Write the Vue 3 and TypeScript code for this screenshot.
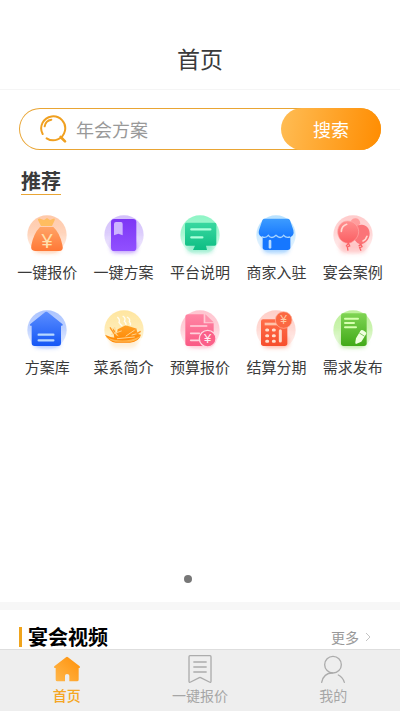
<script setup lang="ts">
import { ref } from 'vue'

interface Entry {
  id: string
  label: string
  halo: string
  from: string
  to: string
}

const entries: Entry[] = [
  { id: 'quote', label: '一键报价', halo: '#ffc9aa', from: '#ffa366', to: '#ff7836' },
  { id: 'plan', label: '一键方案', halo: '#d3c0fb', from: '#7d36f5', to: '#9150ff' },
  { id: 'about', label: '平台说明', halo: '#8ff5c6', from: '#39d8a0', to: '#0dbd83' },
  { id: 'shop', label: '商家入驻', halo: '#b9e2ff', from: '#3d9cff', to: '#1677ff' },
  { id: 'case', label: '宴会案例', halo: '#ffcccc', from: '#ff8f8f', to: '#fb5e62' },
  { id: 'library', label: '方案库', halo: '#adc5ff', from: '#5b8dff', to: '#1557f5' },
  { id: 'cuisine', label: '菜系简介', halo: '#ffe6a0', from: '#ffa126', to: '#ff8500' },
  { id: 'budget', label: '预算报价', halo: '#ffc4cf', from: '#ff86a4', to: '#fa5a85' },
  { id: 'settle', label: '结算分期', halo: '#ffcfc8', from: '#ff6e4a', to: '#f74e2c' },
  { id: 'demand', label: '需求发布', halo: '#bdf09a', from: '#7fd453', to: '#41aa18' },
]

const keyword = ref('')
const tab = ref('home')
</script>

<template>
  <div class="page">
    <header class="header">
      <h1>首页</h1>
    </header>

    <main class="content">
      <form class="search" @submit.prevent>
        <svg class="search-icon" viewBox="0 0 84 90" fill="none" stroke="#f0a020" stroke-linecap="round" aria-hidden="true">
          <path d="M11 60A36 36 0 1 1 23 73" stroke-width="6" />
          <path d="M17 37A24 24 0 0 1 37 17" stroke-width="6" />
          <path d="M65 69L78 82" stroke-width="8" />
        </svg>
        <input v-model="keyword" type="text" placeholder="年会方案" aria-label="搜索方案" />
        <button type="submit">搜索</button>
      </form>

      <section class="recommend">
        <h2>推荐</h2>
        <nav class="grid">
          <a v-for="e in entries" :key="e.id" href="#" @click.prevent>
            <svg class="entry-icon" viewBox="40 18 144 144" aria-hidden="true">
              <defs>
                <linearGradient :id="e.id + '-halo'" x1="0" y1="0" x2="0" y2="1">
                  <stop offset="0" :stop-color="e.halo" />
                  <stop offset="0.45" :stop-color="e.halo" stop-opacity="0.8" />
                  <stop offset="1" :stop-color="e.halo" stop-opacity="0.1" />
                </linearGradient>
                <linearGradient :id="e.id + '-fill'" x1="0" y1="0" x2="0" y2="1">
                  <stop offset="0" :stop-color="e.from" />
                  <stop offset="1" :stop-color="e.to" />
                </linearGradient>
                <filter :id="e.id + '-soft'" x="-20%" y="-20%" width="140%" height="140%">
                  <feGaussianBlur stdDeviation="2" />
                </filter>
                <filter :id="e.id + '-blur'" x="-40%" y="-60%" width="180%" height="220%">
                  <feGaussianBlur stdDeviation="7" />
                </filter>
              </defs>
              <circle cx="112" cy="90" r="59" :fill="`url(#${e.id}-halo)`" :filter="`url(#${e.id}-soft)`" />
              <rect x="72" y="108" width="80" height="36" rx="14" :fill="e.from" opacity="0.4" :filter="`url(#${e.id}-blur)`" />

              <g v-if="e.id === 'quote'">
                <path d="M94 63L85 45Q84 39 92 41L103 45L112 39L121 45L131 41Q137 39 135 46L127 63Z" fill="#ffbd60" />
                <path d="M91 66H131Q150 83 158 119Q163 138 148 138H76Q62 138 65 121Q72 85 91 66Z" fill="url(#quote-fill)" />
                <text class="yen" x="112" y="128" font-size="60" fill="#ffe0ad">¥</text>
              </g>

              <g v-else-if="e.id === 'plan'">
                <rect x="73" y="42" width="76" height="96" rx="10" fill="url(#plan-fill)" />
                <path d="M82 57Q82 51 88 51H103Q108 51 108 57V91L95 86L82 91Z" fill="#cdb4ff" />
              </g>

              <g v-else-if="e.id === 'about'">
                <path d="M71 53H157Q161 53 161 58V117Q161 122 156 122H130L133 135H91L97 122H72Q67 122 67 117V58Q67 53 71 53Z" fill="url(#about-fill)" />
                <path d="M86 73H143M86 97H119" stroke="#adffdc" stroke-width="7" stroke-linecap="round" />
              </g>

              <g v-else-if="e.id === 'shop'">
                <path d="M72 91H155V127Q155 135 147 135H80Q72 135 72 127Z" fill="#1677ff" />
                <path d="M76 41H148Q152 41 154 46L164 75Q168 92 153 97Q142 100 135 91Q125 104 112 91Q99 104 89 91Q80 101 68 95Q57 89 61 76L71 46Q73 41 76 41Z" fill="url(#shop-fill)" />
                <path d="M69 95Q80 101 89 91Q99 104 112 91Q125 104 135 91Q142 100 154 96" fill="none" stroke="#a9d5ff" stroke-width="4" />
                <path d="M94 108V127" stroke="#b9dcff" stroke-width="8" stroke-linecap="round" />
              </g>

              <g v-else-if="e.id === 'case'">
                <path d="M103 55Q107 39 121 40Q133 42 134 56L126 63Z" fill="#ff9c9c" />
                <path d="M133 60C148 56 162 68 162 86C162 103 149 116 135 118C126 117 115 106 113 93C111 75 118 60 133 60Z" fill="#fb7478" />
                <path d="M135 116L139 125L132 128L136 137M135 118L129 124" fill="none" stroke="#fa6265" stroke-width="4" />
                <path d="M96 48C115 48 129 63 129 80C129 99 111 113 99 115L96 115C77 113 66 97 66 80C66 62 79 48 96 48Z" fill="url(#case-fill)" stroke="#ffaaa9" stroke-width="2" />
                <path d="M98 114L102 123L95 126L97 137M98 115L91 124" fill="none" stroke="#fa6265" stroke-width="4" />
                <path d="M77 79Q78 63 93 58M154 94Q151 104 142 108" fill="none" stroke="#ffd6d0" stroke-width="5" stroke-linecap="round" />
              </g>

              <g v-else-if="e.id === 'library'">
                <path d="M104 38Q110 33 116 38L158 72Q162 77 155 77H154V129Q154 138 145 138H75Q66 138 66 129V77H63Q58 76 63 71Z" fill="url(#library-fill)" />
                <path d="M87 104H131M87 121H131" stroke="#b7d8ff" stroke-width="7" stroke-linecap="round" />
              </g>

              <g v-else-if="e.id === 'cuisine'">
                <path d="M50 114H174V160H50Z" fill="#ffffff" opacity="0.6" />
                <path d="M55 104Q72 112 83 113L78 84L91 99L93 88L117 76L146 85L151 101L163 104Q158 124 130 128H87Q67 125 55 104Z" fill="url(#cuisine-fill)" />
                <path d="M58 110Q109 134 162 108Q149 123 133 125H86Q69 121 58 110Z" fill="#ffb650" />
                <path d="M72 88L94 107M84 83L89 105M75 103L104 93M118 108L143 91M136 105L158 99M92 116L143 111" fill="none" stroke="#ffd590" stroke-width="3" stroke-linecap="round" />
                <path d="M70 82L82 101M147 85L151 101L162 94" fill="none" stroke="#ff9a24" stroke-width="4" />
                <path d="M92 51Q101 59 97 67Q102 75 107 78M108 48Q119 55 113 64Q119 69 118 76M121 51Q132 57 128 65Q134 71 130 76" fill="none" stroke="#fffdf2" stroke-width="4" />
              </g>

              <g v-else-if="e.id === 'budget'">
                <path d="M76 43H123V70H153V130Q153 138 145 138H76Q68 138 68 130V51Q68 43 76 43Z" fill="url(#budget-fill)" />
                <path d="M128 43L153 67H128Z" fill="#ff93ad" />
                <path d="M84 78H132M84 100H110M84 121H108" stroke="#ffd3dd" stroke-width="5" stroke-linecap="round" />
                <circle cx="135" cy="116" r="25" fill="#fb6089" stroke="#ffd7e0" stroke-width="4" />
                <text class="yen" x="135" y="130" font-size="39" fill="#fff0f3">¥</text>
              </g>

              <g v-else-if="e.id === 'settle'">
                <path d="M73 58H139Q146 58 146 65V130Q146 138 138 138H75Q67 138 67 130V64Q67 58 73 58Z" fill="url(#settle-fill)" />
                <path d="M78 72H119" stroke="#ffc3a9" stroke-width="8" />
                <path d="M84 90H87M104 90H107M84 107H87M104 107H107M84 124H87M104 124H107" stroke="#ffe0ce" stroke-width="9" stroke-linecap="round" />
                <path d="M125 92V123" stroke="#ffd8c7" stroke-width="9" stroke-linecap="round" />
                <circle cx="135" cy="60" r="25" fill="#fb6842" stroke="#ffb8a4" stroke-width="2" />
                <text class="yen" x="135" y="73" font-size="36" fill="#ffc9a4">¥</text>
              </g>

              <g v-else>
                <path d="M82 40H147Q153 40 153 47V130Q153 138 145 138H84Q76 138 76 130V47Q76 40 82 40Z" fill="url(#demand-fill)" />
                <path d="M88 56H127M88 69H115M88 82H121" stroke="#d6ffaf" stroke-width="6" stroke-linecap="round" />
                <path d="M121 115L134 93Q137 88 142 91L149 95Q154 98 151 103L137 125L121 132Q118 130 119 126Z" fill="#efffdf" />
                <path d="M131 99L147 109" stroke="#82c761" stroke-width="3" />
              </g>
            </svg>
            <span>{{ e.label }}</span>
          </a>
        </nav>
      </section>

      <section class="banner" aria-label="轮播">
        <i class="dot active"></i>
        <i class="dot"></i>
      </section>

      <section class="videos">
        <h2>宴会视频</h2>
        <a class="more" href="#" @click.prevent>
          更多
          <svg viewBox="0 0 6 10" aria-hidden="true"><path d="M1 1L5 5L1 9" fill="none" stroke="#c4c4c4" /></svg>
        </a>
      </section>
    </main>

    <nav class="tabbar">
      <button type="button" :class="{ active: tab === 'home' }" @click="tab = 'home'">
        <svg viewBox="0 0 90 90" aria-hidden="true">
          <defs>
            <linearGradient id="home-fill" x1="0" y1="1" x2="1" y2="0">
              <stop offset="0" stop-color="#ffb84d" />
              <stop offset="1" stop-color="#ff9008" />
            </linearGradient>
          </defs>
          <path d="M42 7Q45 4 48 7L83 34Q86 38 82 39H80V74Q80 79 75 79H52V62Q52 57 45 57Q39 57 39 62V79H16Q11 79 11 74V39H8Q4 38 7 34Z" fill="url(#home-fill)" />
        </svg>
        <span>首页</span>
      </button>
      <button type="button" :class="{ active: tab === 'quote' }" @click="tab = 'quote'">
        <svg viewBox="0 0 90 90" fill="none" stroke="#acacac" stroke-width="4" stroke-linejoin="round" aria-hidden="true">
          <path d="M15 2H75Q78 2 78 5V79Q78 84 73 81L47 68Q45 67 43 68L17 81Q12 84 12 79V5Q12 2 15 2Z" />
          <path d="M25 21H65M25 36H65M25 51H65" />
        </svg>
        <span>一键报价</span>
      </button>
      <button type="button" :class="{ active: tab === 'mine' }" @click="tab = 'mine'">
        <svg viewBox="0 0 90 90" fill="none" stroke="#acacac" stroke-width="4" stroke-linecap="round" aria-hidden="true">
          <circle cx="45" cy="29" r="25" />
          <path d="M11 82Q17 54 43 54M61 60Q74 66 79 82" />
        </svg>
        <span>我的</span>
      </button>
    </nav>
  </div>
</template>

<style>
body {
  background: #fff;
}
</style>

<style scoped>
.page {
  display: flex;
  flex-direction: column;
  height: 100vh;
  background: #fff;
  color: #3a3a3a;
  font-family: "Noto Sans CJK SC", sans-serif;
}
.page * {
  box-sizing: border-box;
}
h1,
h2 {
  margin: 0;
}
a {
  color: inherit;
  text-decoration: none;
}
button,
input {
  border: 0;
  padding: 0;
  background: none;
  font-family: inherit;
}
.header {
  flex: none;
  padding: 28px 0 1px;
  border-bottom: 1px solid #f5f5f5;
}
.header h1 {
  font-size: 23px;
  line-height: 60px;
  font-weight: 400;
  text-align: center;
}
.content {
  flex: 1;
  min-height: 0;
  overflow-y: auto;
  scrollbar-width: none;
}
.search {
  display: flex;
  align-items: center;
  height: 42px;
  margin: 18px 19px 0;
  padding-left: 20px;
  border-radius: 21px;
  box-shadow: inset 0 0 0 1px #e9a534;
}
.search-icon {
  flex: none;
  width: 28px;
  height: 30px;
}
.search input {
  flex: 1;
  min-width: 0;
  height: 40px;
  padding-left: 9px;
  outline: 0;
  color: #333;
  font-size: 18px;
}
.search input::placeholder {
  color: #999;
  opacity: 1;
}
.search button {
  flex: none;
  width: 100px;
  height: 42px;
  border-radius: 21px;
  background: linear-gradient(100deg, #ffbd55, #ff8c00);
  color: #fff;
  font-size: 18px;
}
.recommend {
  padding-top: 17px;
}
.recommend h2 {
  width: fit-content;
  margin-left: 21px;
  border-bottom: 1px solid #e9a534;
  font-size: 20px;
  line-height: 27px;
}
.grid {
  display: grid;
  grid-template-columns: repeat(5, 1fr);
  row-gap: 23px;
  padding: 16px 9px 0;
}
.grid a {
  display: flex;
  flex-direction: column;
  align-items: center;
  gap: 2px;
  font-size: 15px;
  line-height: 22px;
  white-space: nowrap;
}
.entry-icon {
  width: 48px;
  height: 48px;
}
.yen {
  font-family: "Liberation Sans", sans-serif;
  text-anchor: middle;
}
.banner {
  display: flex;
  align-items: flex-end;
  justify-content: center;
  gap: 16px;
  height: 224px;
  padding-bottom: 19px;
}
.dot {
  width: 8px;
  height: 8px;
  border-radius: 50%;
  background: #fff;
}
.dot.active {
  background: #777;
}
.videos {
  display: flex;
  align-items: flex-start;
  justify-content: space-between;
  padding: 17px 29px 12px 19px;
  border-top: 8px solid #f7f7f7;
}
.videos h2 {
  padding-left: 6px;
  border-left: 3px solid #f0a41c;
  color: #000;
  font-size: 20px;
  line-height: 20px;
}
.more {
  display: flex;
  align-items: center;
  gap: 6px;
  color: #999;
  font-size: 14px;
  line-height: 20px;
}
.more svg {
  width: 6px;
  height: 10px;
}
.tabbar {
  display: flex;
  flex: none;
  height: 62px;
  border-top: 1px solid #dedede;
  background: #eee;
}
.tabbar button {
  display: flex;
  flex: 1;
  flex-direction: column;
  align-items: center;
  padding-top: 5px;
  color: #a6a6a6;
  font-size: 14px;
  line-height: 20px;
}
.tabbar svg {
  width: 30px;
  height: 30px;
}
.tabbar .active {
  color: #f5a623;
  font-weight: 500;
}
</style>
